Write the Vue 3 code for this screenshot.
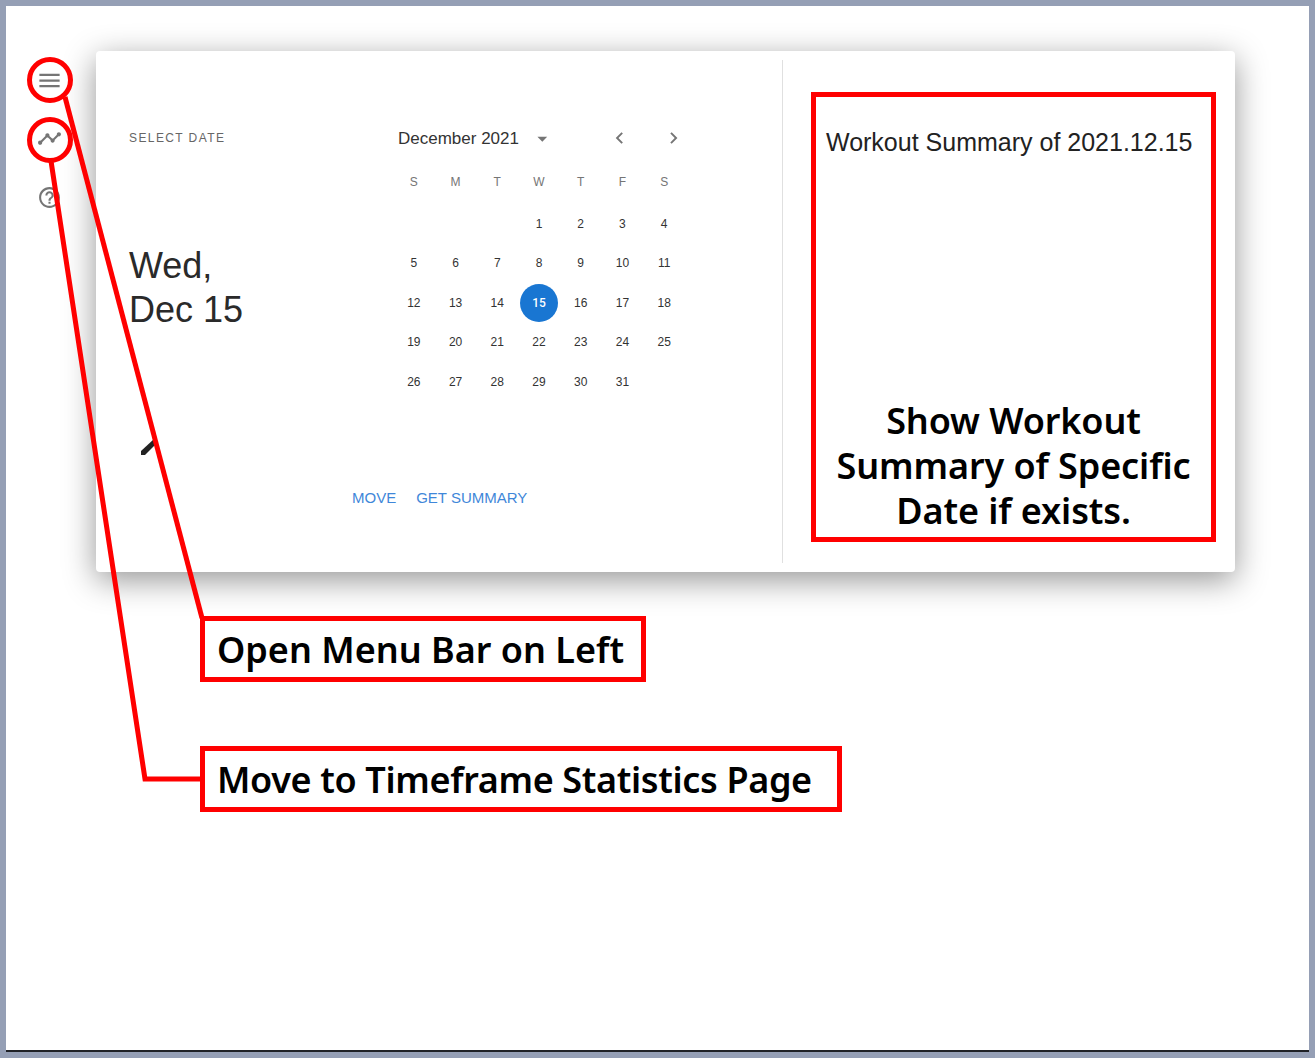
<script setup>
const weekdays = ['S', 'M', 'T', 'W', 'T', 'F', 'S'];
// December 2021 starts on a Wednesday
const days = [null, null, null];
for (let d = 1; d <= 31; d++) days.push(d);
const selected = 15;
</script>

<template>
  <div class="frame">
    <div class="page">
      <div class="top">
        <nav class="rail">
          <svg class="ico menu" viewBox="0 0 24 24"><path d="M3 18h18v-2H3v2zm0-5h18v-2H3v2zm0-7v2h18V6H3z" /></svg>
          <svg class="ico timeline" viewBox="0 0 24 24"><path d="M23 8c0 1.1-.9 2-2 2-.18 0-.35-.02-.51-.07l-3.56 3.55c.05.16.07.34.07.52 0 1.1-.9 2-2 2s-2-.9-2-2c0-.18.02-.36.07-.52l-2.55-2.55c-.16.05-.34.07-.52.07s-.36-.02-.52-.07l-4.55 4.56c.05.16.07.33.07.51 0 1.1-.9 2-2 2s-2-.9-2-2 .9-2 2-2c.18 0 .35.02.51.07l4.56-4.55C8.02 9.36 8 9.18 8 9c0-1.1.9-2 2-2s2 .9 2 2c0 .18-.02.36-.07.52l2.55 2.55c.16-.05.34-.07.52-.07s.36.02.52.07l3.55-3.56C19.02 8.35 19 8.18 19 8c0-1.1.9-2 2-2s2 .9 2 2z" /></svg>
          <svg class="ico help" viewBox="0 0 24 24"><path d="M11 18h2v-2h-2v2zm1-16C6.48 2 2 6.48 2 12s4.48 10 10 10 10-4.48 10-10S17.52 2 12 2zm0 18c-4.41 0-8-3.59-8-8s3.59-8 8-8 8 3.59 8 8-3.59 8-8 8zm0-14c-2.21 0-4 1.79-4 4h2c0-1.1.9-2 2-2s2 .9 2 2c0 2-3 1.75-3 5h2c0-2.25 3-2.5 3-5 0-2.21-1.79-4-4-4z" /></svg>
        </nav>

        <section class="card">
          <div class="picker">
            <div class="picker-top">
              <div class="summary-side">
                <span class="overline">SELECT DATE</span>
                <h1 class="picked">Wed,<br />Dec 15</h1>
                <svg class="pencil" viewBox="0 0 20 18"><path d="M1 14 14 2 18 5 5 18H1z" /></svg>
              </div>
              <div class="calendar">
                <div class="cal-head">
                  <span class="month">December 2021</span>
                  <svg class="caret" viewBox="0 0 12 6"><path d="M0.5 0.5h11L6 6z" /></svg>
                  <svg class="chev prev" viewBox="0 0 24 24"><path d="M15.41 7.41 14 6l-6 6 6 6 1.41-1.41L10.83 12z" /></svg>
                  <svg class="chev next" viewBox="0 0 24 24"><path d="M10 6 8.59 7.41 13.17 12l-4.58 4.59L10 18l6-6z" /></svg>
                </div>
                <div class="weekdays">
                  <span v-for="(w, i) in weekdays" :key="i">{{ w }}</span>
                </div>
                <div class="days">
                  <span v-for="(d, i) in days" :key="i" class="day">
                    <b v-if="d === selected" class="sel">{{ d }}</b>
                    <template v-else>{{ d }}</template>
                  </span>
                </div>
              </div>
            </div>
            <div class="actions">
              <button>MOVE</button>
              <button>GET SUMMARY</button>
            </div>
          </div>
          <div class="divider"></div>
          <div class="note summary-box">
            <h2 class="summary-title">Workout Summary of 2021.12.15</h2>
            <p class="label center">Show Workout Summary of Specific Date if exists.</p>
          </div>
        </section>
      </div>

      <div class="note callout first"><p class="label">Open Menu Bar on Left</p></div>
      <div class="note callout second"><p class="label">Move to Timeframe Statistics Page</p></div>

      <!-- annotation strokes drawn on top of the screenshot -->
      <svg class="marks" width="1303" height="1044" viewBox="6 6 1303 1044">
        <circle cx="50" cy="80" r="20.5" />
        <circle cx="50" cy="140" r="20.5" />
        <path d="M65 97 202 618" />
        <path d="M51 161 145 779H202" />
      </svg>
    </div>
  </div>
</template>

<style>
html, body {
  margin: 0;
  background: #fff;
}
</style>

<style scoped>
.frame {
  width: 1315px;
  height: 1058px;
  box-sizing: border-box;
  border: 6px solid #959fb5;
  font-family: Roboto, "Liberation Sans", sans-serif;
}
.page {
  position: relative;
  height: 100%;
  box-sizing: border-box;
  background: #fff;
  border-bottom: 2px solid #1f2126;
}
.top {
  display: flex;
  padding-top: 45px;
}
.rail {
  width: 90px;
  display: flex;
  flex-direction: column;
  align-items: center;
  box-sizing: border-box;
  padding-right: 3px;
}
.ico {
  fill: #757575;
  display: block;
}
.menu {
  width: 27px;
  height: 27px;
  margin-top: 16px;
}
.timeline {
  width: 25px;
  height: 25px;
  margin-top: 32px;
}
.help {
  width: 25px;
  height: 25px;
  margin-top: 34px;
}
.card {
  width: 1139px;
  height: 521px;
  display: flex;
  background: #fff;
  border-radius: 4px;
  box-shadow: 0 8px 32px rgba(0, 0, 0, 0.42);
}
.picker {
  width: 686px;
  flex: none;
  display: flex;
  flex-direction: column;
}
.picker-top {
  display: flex;
}
.summary-side {
  width: 297px;
  flex: none;
  box-sizing: border-box;
  padding: 80px 0 0 33px;
}
.overline {
  display: block;
  font-family: "Liberation Sans", Roboto, sans-serif;
  font-size: 12px;
  line-height: 14px;
  letter-spacing: 1.4px;
  color: #666;
}
.picked {
  margin: 99px 0 0;
  font-family: "Liberation Sans", Roboto, sans-serif;
  font-weight: 400;
  font-size: 36px;
  line-height: 44px;
  color: #2a2a2a;
}
.pencil {
  display: block;
  width: 20px;
  height: 18px;
  margin: 105px 0 0 11px;
  fill: #222;
}
.calendar {
  width: 292px;
  flex: none;
  font-family: "Liberation Sans", Roboto, sans-serif;
}
.cal-head {
  display: flex;
  align-items: center;
  height: 24px;
  margin-top: 75px;
  padding-left: 5px;
}
.month {
  padding-top: 2px;
  font-size: 17px;
  color: #333;
  width: 144px;
}
.caret {
  width: 11px;
  height: 6px;
  margin-top: 2px;
  fill: #757575;
}
.chev {
  width: 24px;
  height: 24px;
  fill: #757575;
}
.prev {
  margin-left: 60px;
}
.next {
  margin-left: 31px;
}
.weekdays,
.days {
  display: grid;
  grid-template-columns: repeat(7, 1fr);
  text-align: center;
}
.weekdays {
  margin-top: 24px;
  font-size: 12px;
  line-height: 16px;
  color: #757575;
}
.days {
  margin-top: 14px;
  grid-auto-rows: 39.5px;
  font-size: 12px;
  color: #333;
}
.day {
  display: flex;
  align-items: center;
  justify-content: center;
}
.sel {
  width: 38px;
  height: 38px;
  border-radius: 50%;
  background: #1976d2;
  color: #fff;
  font-family: Roboto, sans-serif;
  font-weight: 500;
  display: flex;
  align-items: center;
  justify-content: center;
}
.actions {
  display: flex;
  gap: 20px;
  margin: 33px 0 0 256px;
}
.actions button {
  border: 0;
  padding: 0;
  background: none;
  font-family: "Liberation Sans", Roboto, sans-serif;
  font-size: 15px;
  line-height: 20px;
  color: #3f87d9;
}
.divider {
  width: 1px;
  margin: 9px 0;
  background: #e0e0e0;
}
.note {
  border: 5px solid #f00;
  box-sizing: border-box;
  background: #fff;
}
.summary-box {
  width: 405px;
  height: 450px;
  margin: 41px 0 0 28px;
  display: flex;
  flex-direction: column;
  justify-content: space-between;
}
.summary-title {
  margin: 29px 0 0 10px;
  font-family: "Liberation Sans", Roboto, sans-serif;
  font-weight: 400;
  font-size: 25px;
  line-height: 32px;
  color: #222;
  white-space: nowrap;
}
.label {
  margin: 0;
  font-family: "Noto Sans", sans-serif;
  font-weight: 600;
  font-size: 36px;
  line-height: 45px;
  color: #000;
  white-space: nowrap;
}
.center {
  white-space: normal;
  text-align: center;
  padding: 0 12px 4px;
  letter-spacing: -0.1px;
}
.callout {
  height: 66px;
  margin-left: 194px;
  padding: 6px 12px;
}
.first {
  width: 446px;
  margin-top: 44px;
}
.second {
  width: 642px;
  margin-top: 64px;
}
.second .label {
  letter-spacing: -0.36px;
}
.marks {
  position: absolute;
  left: 0;
  top: 0;
  fill: none;
  stroke: #f00;
  stroke-width: 5;
  pointer-events: none;
}
</style>
